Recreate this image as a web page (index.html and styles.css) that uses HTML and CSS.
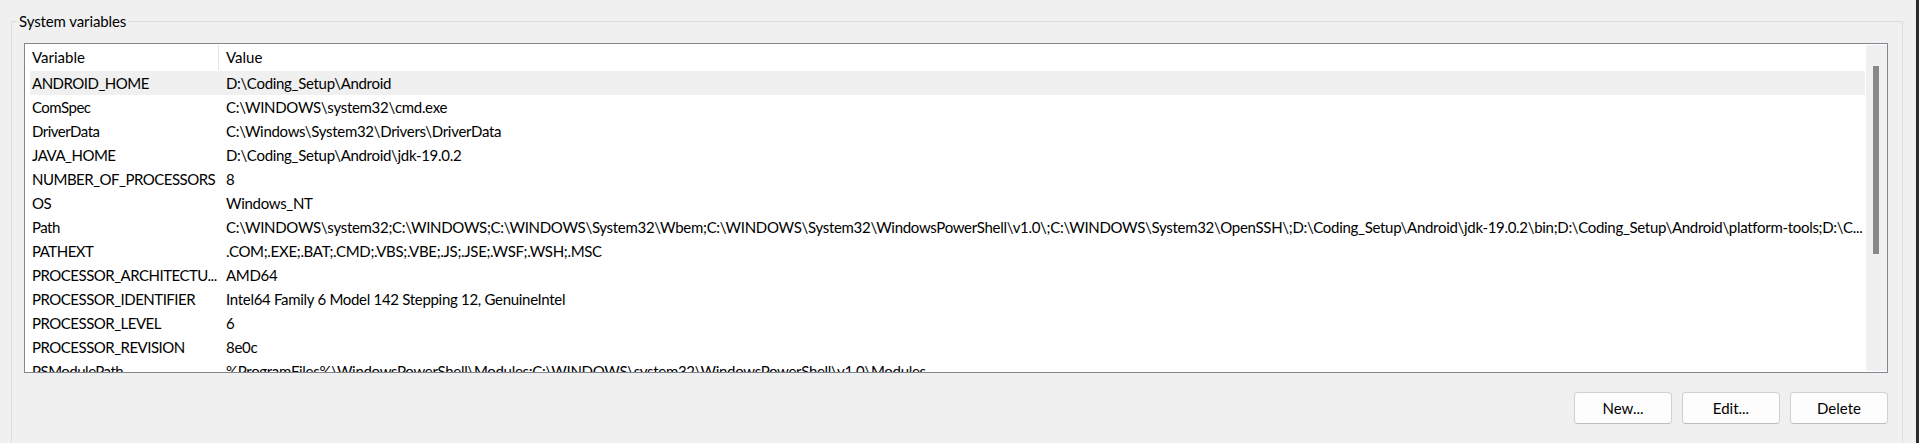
FILE: index.html
```html
<!DOCTYPE html>
<html lang="en">
<head>
<meta charset="utf-8">
<title>System variables</title>
<link rel="stylesheet" href="styles.css">
</head>
<body>
<div class="window">
  <fieldset class="group">
    <legend class="group-label">System variables</legend>
    <div class="list">
      <div class="list-body">
        <div class="list-head">
          <div class="head-cell head-var">Variable</div>
          <div class="head-cell head-val">Value</div>
        </div>
        <div class="rows">
          <div class="row selected"><div class="cell var">ANDROID_HOME</div><div class="cell val">D:\Coding_Setup\Android</div></div>
          <div class="row"><div class="cell var">ComSpec</div><div class="cell val">C:\WINDOWS\system32\cmd.exe</div></div>
          <div class="row"><div class="cell var">DriverData</div><div class="cell val">C:\Windows\System32\Drivers\DriverData</div></div>
          <div class="row"><div class="cell var">JAVA_HOME</div><div class="cell val">D:\Coding_Setup\Android\jdk-19.0.2</div></div>
          <div class="row"><div class="cell var">NUMBER_OF_PROCESSORS</div><div class="cell val">8</div></div>
          <div class="row"><div class="cell var">OS</div><div class="cell val">Windows_NT</div></div>
          <div class="row"><div class="cell var">Path</div><div class="cell val">C:\WINDOWS\system32;C:\WINDOWS;C:\WINDOWS\System32\Wbem;C:\WINDOWS\System32\WindowsPowerShell\v1.0\;C:\WINDOWS\System32\OpenSSH\;D:\Coding_Setup\Android\jdk-19.0.2\bin;D:\Coding_Setup\Android\platform-tools;D:\C...</div></div>
          <div class="row"><div class="cell var">PATHEXT</div><div class="cell val">.COM;.EXE;.BAT;.CMD;.VBS;.VBE;.JS;.JSE;.WSF;.WSH;.MSC</div></div>
          <div class="row"><div class="cell var">PROCESSOR_ARCHITECTU...</div><div class="cell val">AMD64</div></div>
          <div class="row"><div class="cell var">PROCESSOR_IDENTIFIER</div><div class="cell val">Intel64 Family 6 Model 142 Stepping 12, GenuineIntel</div></div>
          <div class="row"><div class="cell var">PROCESSOR_LEVEL</div><div class="cell val">6</div></div>
          <div class="row"><div class="cell var">PROCESSOR_REVISION</div><div class="cell val">8e0c</div></div>
          <div class="row"><div class="cell var">PSModulePath</div><div class="cell val">%ProgramFiles%\WindowsPowerShell\Modules;C:\WINDOWS\system32\WindowsPowerShell\v1.0\Modules</div></div>
        </div>
      </div>
      <div class="scrollbar"><div class="thumb"></div></div>
    </div>
    <div class="buttons">
      <button class="btn" type="button">New...</button>
      <button class="btn" type="button">Edit...</button>
      <button class="btn" type="button">Delete</button>
    </div>
  </fieldset>
  <div class="edge"></div>
</div>
</body>
</html>
```

FILE: styles.css
```css
html, body {
  margin: 0;
  padding: 0;
  height: 100%;
  overflow: hidden;
  background: #f0f0f0;
}

body {
  font-family: Lato, "Liberation Sans", sans-serif;
  font-size: 15px;
  color: #000;
}

.window {
  display: flex;
  height: 100%;
}

.group {
  flex: 1;
  margin: 11px 13px 0 11px;
  padding: 0 14px 60px 12px;
  border: 1px solid #dcdcdc;
  min-width: 0;
  align-self: flex-start;
  height: 480px;
}

.group-label {
  margin-left: -7px;
  padding: 0 2px;
  line-height: 20px;
  height: 20px;
  letter-spacing: -0.1px;
}

.list {
  margin-top: 12px;
  height: 328px;
  border: 1px solid #828790;
  background: #fff;
  display: flex;
  overflow: hidden;
}

.list-body {
  flex: 1;
  min-width: 0;
  display: flex;
  flex-direction: column;
}

.list-head {
  display: flex;
  height: 27px;
  line-height: 27px;
  margin-left: 5px;
}

.head-cell {
  white-space: nowrap;
}

.head-var {
  width: 186px;
  padding-left: 2px;
  border-right: 1px solid #e5e5e5;
  margin: 1px 0 1px 0;
  line-height: 25px;
}

.head-val {
  padding-left: 7px;
}

.rows {
  margin-left: 5px;
  overflow: hidden;
}

.row {
  display: flex;
  height: 24px;
  line-height: 24px;
}

.row.selected {
  background: #f0f0f0;
}

.cell {
  white-space: nowrap;
  overflow: hidden;
  text-overflow: clip;
}

.var {
  width: 194px;
  padding-left: 2px;
  flex: none;
  letter-spacing: -0.5px;
}

.val {
  flex: 1;
  min-width: 0;
  letter-spacing: -0.3px;
}

.scrollbar {
  width: 21px;
  flex: none;
  margin: 1px 0 1px 1px;
  background: #f0f0f0;
  padding-top: 21px;
  box-sizing: border-box;
}

.thumb {
  width: 6px;
  height: 188px;
  margin-left: 7px;
  background: #888888;
}

.buttons {
  display: flex;
  justify-content: flex-end;
  gap: 10px;
  margin-top: 19px;
}

.btn {
  width: 98px;
  height: 32px;
  padding: 0;
  border: 1px solid #d0d0d0;
  border-bottom-color: #bdbdbd;
  border-radius: 4px;
  background: #fdfdfd;
  font-family: Lato, "Liberation Sans", sans-serif;
  font-size: 15px;
  color: #000;
}

.edge {
  width: 3px;
  flex: none;
  background: #2b2b2b;
}
```
